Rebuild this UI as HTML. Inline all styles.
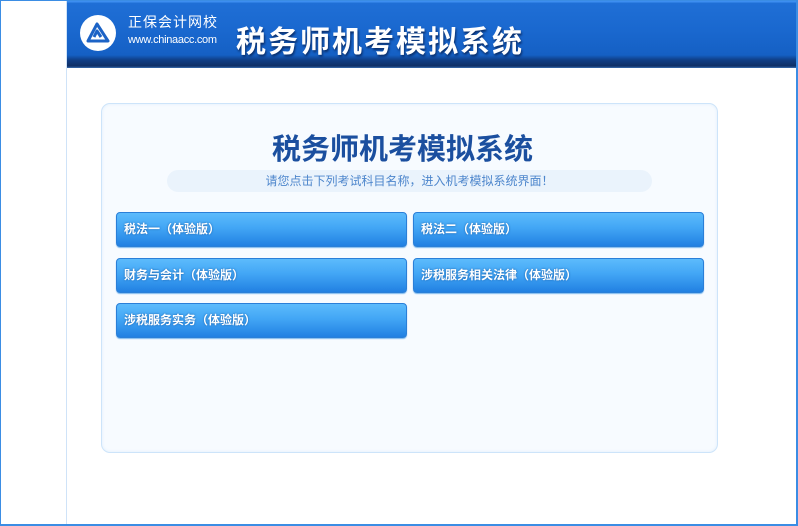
<!DOCTYPE html>
<html><head><meta charset="utf-8"><style>
*{margin:0;padding:0;box-sizing:border-box}
body{width:798px;height:526px;overflow:hidden;background:#fff;font-family:"Liberation Sans","Noto Sans CJK SC",sans-serif;position:relative}
.frame{position:absolute;left:0;top:0;width:798px;height:526px;border:1px solid #3b8de4;border-right-width:2px;border-bottom-width:2px}
.vline{position:absolute;left:66px;top:0;width:1px;height:526px;background:#cfe3f8}
.hdr{position:absolute;left:67px;top:0;width:729px;height:68px;background:linear-gradient(#3d8ef0 0,#3d8ef0 2px,#1f6fd6 3px,#1a68cf 30px,#1560c4 55px,#103e86 60px,#0f2f66 66px,#3c6fb0 68px)}
.logo{position:absolute;left:80px;top:15px;width:36px;height:36px;border-radius:50%;background:#fff}
.t1{position:absolute;left:128px;top:12px;color:#fff;font-size:14px;letter-spacing:1px}
.t2{position:absolute;left:128px;top:34px;color:#fff;font-size:11px;letter-spacing:-0.3px}
.big{position:absolute;left:236px;top:17px;color:#fff;font-size:30px;font-weight:bold;letter-spacing:2px;text-shadow:1px 2px 2px #0a2e6a}
.panel{position:absolute;left:101px;top:103px;width:617px;height:350px;border:1px solid #cde4fa;border-radius:9px;background:#f7fbff;box-shadow:inset 0 0 3px #e0eefc}
.title{position:absolute;left:101px;width:617px;top:126px;text-align:center;font-size:29px;font-weight:bold;color:#1b4f9f;padding-right:14px}
.sub{position:absolute;left:167px;top:170px;width:485px;height:22px;border-radius:11px;background:#eaf3fc;text-align:center;font-size:12px;line-height:22px;color:#4d86cc}
.btn{position:absolute;width:291px;height:35px;border-radius:4px;background:linear-gradient(#5cbbfc,#42a6f5 45%,#2180e2);border:1px solid #2a7fd8;box-shadow:0 1px 1px #7ab8ee;color:#fff;font-size:12px;font-weight:bold;line-height:33px;padding-left:7px;text-shadow:0 0 2px #1c5fa8}
</style></head><body>
<div class="vline"></div>
<div class="hdr"></div>
<div class="logo"><svg width="36" height="36" viewBox="0 0 36 36"><path d="M8 26 L17 9 L28 26 Z M14 22 L17 16 L21 22" fill="none" stroke="#1c63c6" stroke-width="3" stroke-linejoin="round"/></svg></div>
<div class="t1">正保会计网校</div>
<div class="t2">www.chinaacc.com</div>
<div class="big">税务师机考模拟系统</div>
<div class="panel"></div>
<div class="title">税务师机考模拟系统</div>
<div class="sub">请您点击下列考试科目名称，进入机考模拟系统界面！</div>
<div class="btn" style="left:116px;top:212px">税法一（体验版）</div>
<div class="btn" style="left:413px;top:212px">税法二（体验版）</div>
<div class="btn" style="left:116px;top:258px">财务与会计（体验版）</div>
<div class="btn" style="left:413px;top:258px">涉税服务相关法律（体验版）</div>
<div class="btn" style="left:116px;top:303px">涉税服务实务（体验版）</div>
<div class="frame"></div>
</body></html>
